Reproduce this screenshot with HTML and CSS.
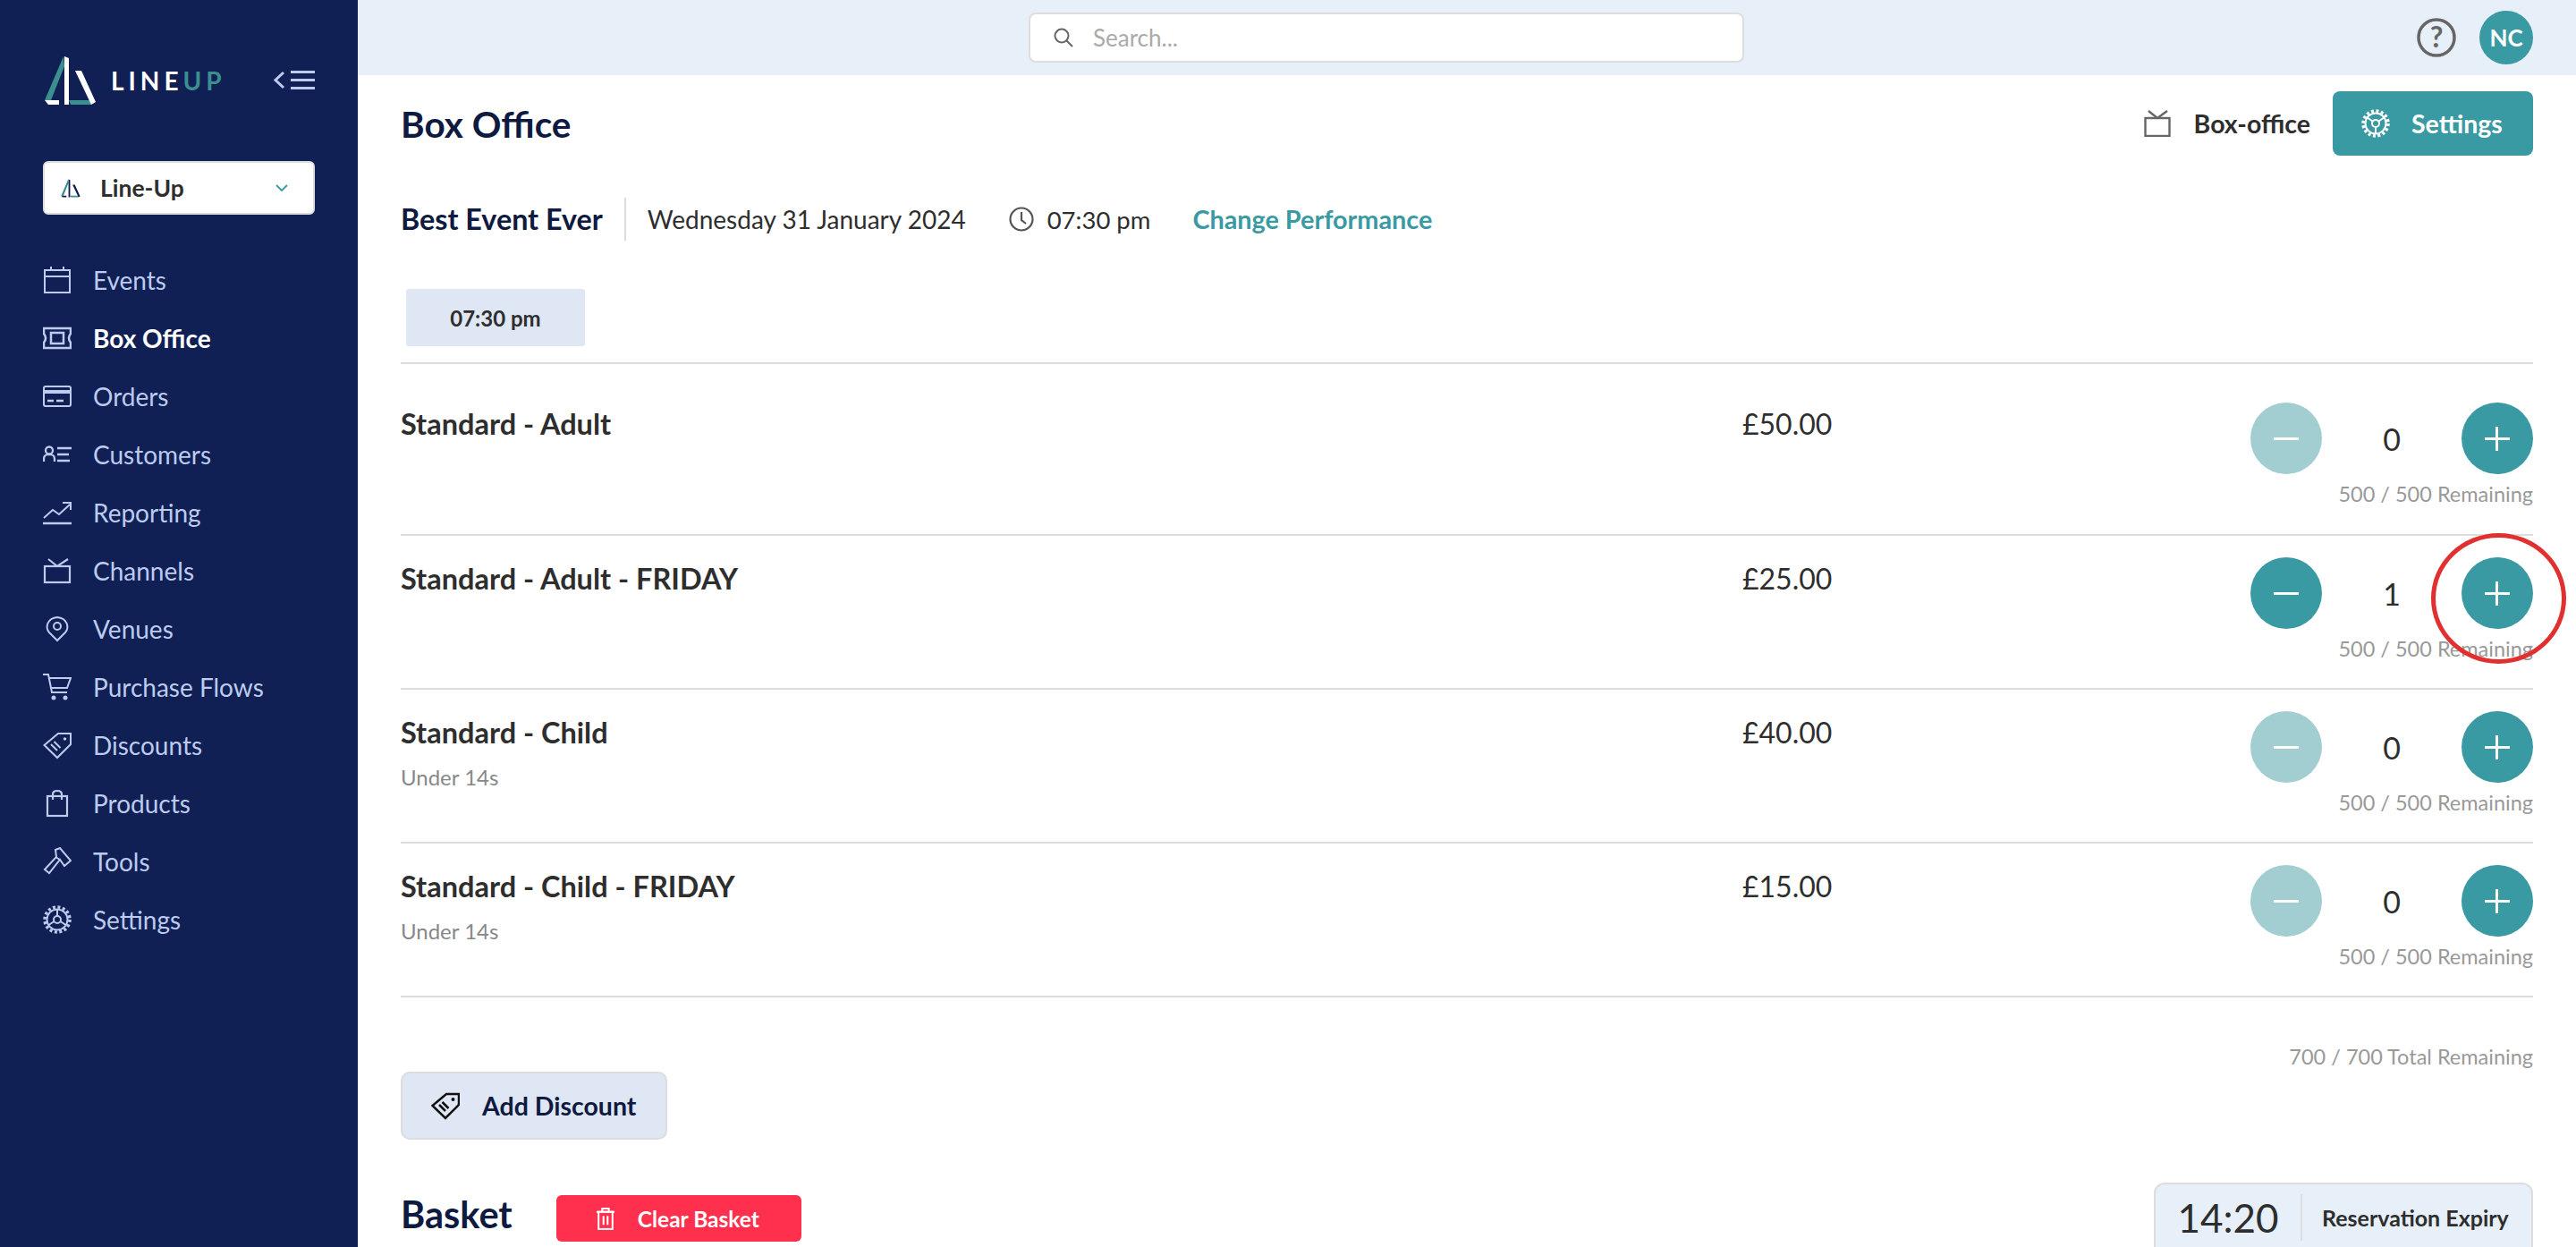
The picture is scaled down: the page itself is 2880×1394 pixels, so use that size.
FILE: index.html
```html
<!DOCTYPE html>
<html lang="en">
<head>
  <meta charset="UTF-8" />
  <title>Box Office</title>
  <link rel="stylesheet" href="styles.css">
</head>
<body>
  <div class="app">
    <aside class="sidebar">
      <div class="brand">
        <svg class="brand-mark" viewBox="0 0 59 56">
          <polygon class="teal" points="22,1 23,12 8,50 1,50" />
          <polygon class="white" points="23,1 28,3 28,55 23,55" />
          <polygon class="white" points="1,50 17,50 17,55 5,55" />
          <polygon class="teal" points="28,50 52,50 53,55 30,55" />
          <polygon class="white" points="35,17 42,17 58,52 53,55" />
        </svg>
        <span class="brand-name">LINE<span class="brand-up">UP</span></span>
        <svg class="collapse" viewBox="0 0 46 22" fill="none" stroke="currentColor">
          <path d="M11 2 L2 10.500 L11 19" stroke-width="3" />
          <path d="M19 1.500 H46 M19 10.500 H46 M19 19.500 H46" stroke-width="3" />
        </svg>
      </div>

      <div class="org-select">
        <svg class="org-mark" viewBox="0 0 59 56">
          <polygon class="teal" points="22,1 23,12 8,50 1,50" />
          <polygon class="navy" points="23,1 28,3 28,55 23,55" />
          <polygon class="navy" points="1,50 17,50 17,55 5,55" />
          <polygon class="teal" points="28,50 52,50 53,55 30,55" />
          <polygon class="navy" points="35,17 42,17 58,52 53,55" />
        </svg>
        <span class="org-name">Line-Up</span>
        <svg class="org-chevron" viewBox="0 0 14 9" fill="none" stroke="currentColor" stroke-width="1.800"><path d="M1 1 L7 7 L13 1" /></svg>
      </div>

      <nav class="nav">
        <a class="nav-item">
          <svg class="nav-icon" viewBox="0 0 32 32" fill="none" stroke="currentColor" stroke-width="2"><rect x="2" y="5" width="28" height="25" /><path d="M2 12 H30 M9 1 V5 M23 1 V5" /></svg>
          Events
        </a>
        <a class="nav-item active">
          <svg class="nav-icon" viewBox="0 0 32 32" fill="none" stroke="currentColor" stroke-width="2.500"><path d="M1 5 H31 V11 Q27 16 31 21 V27 H1 V21 Q5 16 1 11 Z" /><rect x="9" y="10" width="14" height="12" /></svg>
          Box Office
        </a>
        <a class="nav-item">
          <svg class="nav-icon" viewBox="0 0 32 32" fill="none" stroke="currentColor" stroke-width="2"><rect x="1" y="5" width="30" height="22" rx="2" /><path d="M1 11 H31" stroke-width="4" /><path d="M5 21 H12 M15 21 H23" stroke-width="2.500" /></svg>
          Orders
        </a>
        <a class="nav-item">
          <svg class="nav-icon" viewBox="0 0 32 32" fill="none" stroke="currentColor" stroke-width="2.300"><circle cx="7" cy="11.500" r="4" /><path d="M1 24 V21 Q1 17 5 16 H9 Q13 17 13 21 V24" /><path d="M16 9 H32 M16 16 H29 M16 23 H30" /></svg>
          Customers
        </a>
        <a class="nav-item">
          <svg class="nav-icon" viewBox="0 0 32 32" fill="none" stroke="currentColor" stroke-width="2"><path d="M1 22 L11 13 L18 18 L30 7" /><path d="M22 5 H31 V13" /><path d="M0 28 H32" stroke-width="2.500" /></svg>
          Reporting
        </a>
        <a class="nav-item">
          <svg class="nav-icon" viewBox="0 0 32 32" fill="none" stroke="currentColor" stroke-width="2.200"><rect x="2" y="11" width="28" height="18" /><path d="M6 3 L16 11 L28 3" /></svg>
          Channels
        </a>
        <a class="nav-item">
          <svg class="nav-icon" viewBox="0 0 32 32" fill="none" stroke="currentColor" stroke-width="2"><path d="M16 29 L7 20 C2 14 5 4 16 3 C27 4 30 14 25 20 Z" /><circle cx="16" cy="13" r="4" /></svg>
          Venues
        </a>
        <a class="nav-item">
          <svg class="nav-icon" viewBox="0 0 32 32" fill="none" stroke="currentColor" stroke-width="2"><path d="M0 2 H6 L10 22 H27" /><path d="M7 6 H31 L27 17 H9" /><circle cx="12" cy="28" r="1.500" fill="currentColor" /><circle cx="25" cy="28" r="1.500" fill="currentColor" /></svg>
          Purchase Flows
        </a>
        <a class="nav-item">
          <svg class="nav-icon" viewBox="0 0 32 32" fill="none" stroke="currentColor" stroke-width="2"><path d="M1.500 16 L17 3 H31 V15 L16 30 Z" /><circle cx="24.500" cy="9" r="1.800" fill="currentColor" stroke="none" /><path d="M9 15 L16 22 M12.500 12 L19.500 19" /></svg>
          Discounts
        </a>
        <a class="nav-item">
          <svg class="nav-icon" viewBox="0 0 32 32" fill="none" stroke="currentColor" stroke-width="2.200"><rect x="5" y="8" width="22" height="22" /><path d="M11 12 V6 Q11 2 16 2 Q21 2 21 6 V12" /></svg>
          Products
        </a>
        <a class="nav-item">
          <svg class="nav-icon" viewBox="0 0 32 32" fill="none" stroke="currentColor" stroke-width="2"><path d="M14 3 L19 1 L31 15 L24 21 L19 14 L7 29 L2 25 L15 11 Z" /><path d="M14 11 L19 14" /></svg>
          Tools
        </a>
        <a class="nav-item">
          <svg class="nav-icon" viewBox="0 0 32 32" fill="none" stroke="currentColor"><circle cx="16" cy="16" r="14" stroke-width="3.500" stroke-dasharray="3 2.500" /><circle cx="16" cy="16" r="11.500" stroke-width="2" /><circle cx="16" cy="16" r="4" stroke-width="2" /><path d="M16 5 V12 M6.500 22 L12.500 18 M25.500 22 L19.500 18" stroke-width="2" /></svg>
          Settings
        </a>
      </nav>
    </aside>

    <div class="main">
      <header class="topbar">
        <div class="search">
          <svg class="search-icon" viewBox="0 0 24 24" fill="none" stroke="currentColor" stroke-width="2"><circle cx="10" cy="10" r="7.500" /><path d="M15.500 15.500 L22 22" /></svg>
          <span>Search...</span>
        </div>
        <div class="top-actions">
          <svg class="help" viewBox="0 0 44 44"><circle cx="22" cy="22" r="20" fill="none" stroke="#666" stroke-width="3.500" /><text x="22" y="33" text-anchor="middle" class="help-mark">?</text></svg>
          <div class="avatar">NC</div>
        </div>
      </header>

      <div class="content">
        <div class="page-head">
          <h1>Box Office</h1>
          <div class="page-tools">
            <svg class="tv-icon" viewBox="0 0 30 30" fill="none" stroke="#666" stroke-width="2.400"><rect x="1.500" y="9" width="27" height="20" /><path d="M5 1 L15 9 L26 1" /></svg>
            <span class="channel-name">Box-office</span>
            <button class="btn-settings">
              <svg class="btn-gear" viewBox="0 0 32 32" fill="none" stroke="currentColor"><circle cx="16" cy="16" r="14" stroke-width="3.500" stroke-dasharray="3 2.500" /><circle cx="16" cy="16" r="11.500" stroke-width="2" /><circle cx="16" cy="16" r="4" stroke-width="2" /><path d="M16 20 V28 M12.500 13.500 L6 9 M19.500 13.500 L26 9" stroke-width="2" /></svg>
              Settings
            </button>
          </div>
        </div>

        <div class="event-line">
          <strong class="event-name">Best Event Ever</strong>
          <span class="event-date">Wednesday 31 January 2024</span>
          <svg class="clock" viewBox="0 0 28 28" fill="none" stroke="#555" stroke-width="2.200"><circle cx="14" cy="14" r="12.500" /><path d="M14 6 V15 L19 19" /></svg>
          <span class="event-time">07:30 pm</span>
          <a class="change-link">Change Performance</a>
        </div>

        <div class="slot">07:30 pm</div>

        <div class="tickets">
          <div class="ticket first">
            <div class="ticket-info"><div class="ticket-name">Standard - Adult</div></div>
            <div class="ticket-price">£50.00</div>
            <div class="ticket-qty">
              <div class="stepper">
                <button class="round off"><span class="minus"></span></button>
                <span class="count">0</span>
                <button class="round"><span class="plus"></span></button>
              </div>
              <div class="remaining">500 / 500 Remaining</div>
            </div>
          </div>
          <div class="ticket">
            <div class="ticket-info"><div class="ticket-name">Standard - Adult - FRIDAY</div></div>
            <div class="ticket-price">£25.00</div>
            <div class="ticket-qty">
              <div class="stepper">
                <button class="round"><span class="minus"></span></button>
                <span class="count">1</span>
                <button class="round circled"><span class="plus"></span></button>
              </div>
              <div class="remaining">500 / 500 Remaining</div>
            </div>
          </div>
          <div class="ticket">
            <div class="ticket-info">
              <div class="ticket-name">Standard - Child</div>
              <div class="ticket-note">Under 14s</div>
            </div>
            <div class="ticket-price">£40.00</div>
            <div class="ticket-qty">
              <div class="stepper">
                <button class="round off"><span class="minus"></span></button>
                <span class="count">0</span>
                <button class="round"><span class="plus"></span></button>
              </div>
              <div class="remaining">500 / 500 Remaining</div>
            </div>
          </div>
          <div class="ticket">
            <div class="ticket-info">
              <div class="ticket-name">Standard - Child - FRIDAY</div>
              <div class="ticket-note">Under 14s</div>
            </div>
            <div class="ticket-price">£15.00</div>
            <div class="ticket-qty">
              <div class="stepper">
                <button class="round off"><span class="minus"></span></button>
                <span class="count">0</span>
                <button class="round"><span class="plus"></span></button>
              </div>
              <div class="remaining">500 / 500 Remaining</div>
            </div>
          </div>
        </div>

        <div class="total-remaining">700 / 700 Total Remaining</div>

        <button class="btn-discount">
          <svg class="discount-icon" viewBox="0 0 32 32" fill="none" stroke="#111" stroke-width="2.500"><path d="M1.500 16 L17 3 H31 V15 L16 30 Z" /><circle cx="24.500" cy="9" r="2" fill="#111" stroke="none" /><path d="M9 15 L16 22 M12.500 12 L19.500 19" /></svg>
          Add Discount
        </button>

        <div class="basket-head">
          <h2>Basket</h2>
          <button class="btn-clear">
            <svg class="trash" viewBox="0 0 24 28" fill="none" stroke="currentColor" stroke-width="2.200"><path d="M1 6 H23 M8 6 V2 H16 V6" /><rect x="3.500" y="6" width="17" height="21" /><path d="M9.500 11 V22 M14.500 11 V22" /></svg>
            Clear Basket
          </button>
          <div class="expiry">
            <span class="expiry-time">14:20</span>
            <span class="expiry-label">Reservation Expiry</span>
          </div>
        </div>
      </div>
    </div>
  </div>
</body>
</html>
```

FILE: styles.css
```css
* {
  margin: 0;
  padding: 0;
  box-sizing: border-box;
  font-family: 'Lato', sans-serif;
}

html, body {
  height: 100%;
  overflow: hidden;
  background: #fff;
}

.app {
  display: flex;
  height: 100vh;
}

/* sidebar */
.sidebar {
  flex: 0 0 400px;
  background: #102054;
  color: #bccbee;
  padding: 62px 48px 0;
}

.brand {
  display: flex;
  align-items: center;
  height: 56px;
}

.brand-mark {
  width: 59px;
  height: 56px;
  margin-left: 1px;
}

.teal { fill: #3c8f8f; }
.white { fill: #fff; }
.navy { fill: #102054; }

.brand-name {
  margin-left: 16px;
  font-size: 28px;
  font-weight: 700;
  letter-spacing: 5px;
  color: #fff;
}

.brand-up { color: #3c8f8f; }

.collapse {
  width: 46px;
  height: 22px;
  margin-left: auto;
  color: #bccbee;
}

.org-select {
  display: flex;
  align-items: center;
  height: 60px;
  margin-top: 62px;
  padding: 0 28px 0 18px;
  background: #fff;
  border: 2px solid #ddd;
  border-radius: 6px;
}

.org-mark {
  width: 22px;
  height: 21px;
}

.org-name {
  margin-left: 22px;
  font-size: 26.500px;
  font-weight: 700;
  color: #2e2e2e;
}

.org-chevron {
  width: 14px;
  height: 9px;
  margin-left: auto;
  color: #3a9aa3;
}

.nav {
  margin-top: 40px;
}

.nav-item {
  display: flex;
  align-items: center;
  gap: 24px;
  height: 65px;
  font-size: 28px;
}

.nav-item.active {
  color: #fff;
  font-weight: 700;
}

.nav-icon {
  flex: 0 0 32px;
  width: 32px;
  height: 32px;
  color: #bccbee;
}

/* top bar */
.main {
  flex: 1;
  min-width: 0;
  display: flex;
  flex-direction: column;
}

.topbar {
  flex: 0 0 84px;
  display: flex;
  align-items: center;
  justify-content: space-between;
  padding: 0 48px 0 750px;
  background: #e7eff9;
}

.search {
  display: flex;
  align-items: center;
  gap: 21px;
  width: 800px;
  height: 56px;
  padding-left: 25px;
  background: #fff;
  border: 2px solid #ddd;
  border-radius: 8px;
  font-size: 26px;
  color: #aaa;
}

.search-icon {
  width: 24px;
  height: 24px;
  color: #666;
}

.top-actions {
  display: flex;
  align-items: center;
  gap: 26px;
}

.help {
  width: 44px;
  height: 44px;
}

.help-mark {
  font-family: 'Lato', sans-serif;
  font-size: 32px;
  font-weight: 700;
  fill: #666;
}

.avatar {
  display: flex;
  align-items: center;
  justify-content: center;
  width: 60px;
  height: 60px;
  border-radius: 50%;
  background: #3a9aa3;
  color: #fff;
  font-size: 26px;
  font-weight: 700;
}

/* content */
.content {
  flex: 1;
  padding: 0 48px;
}

.page-head {
  display: flex;
  align-items: center;
  justify-content: space-between;
  height: 72px;
  margin-top: 18px;
}

h1 {
  font-size: 40.500px;
  font-weight: 700;
  color: #0e1a40;
}

.page-tools {
  display: flex;
  align-items: center;
}

.tv-icon {
  width: 30px;
  height: 30px;
}

.channel-name {
  margin-left: 26px;
  margin-right: 25px;
  font-size: 28.500px;
  font-weight: 700;
  color: #2e2e2e;
}

.btn-settings {
  display: flex;
  align-items: center;
  gap: 24px;
  width: 224px;
  height: 72px;
  padding-left: 32px;
  border: none;
  border-radius: 8px;
  background: #3a9aa3;
  color: #fff;
  font-size: 28.500px;
  font-weight: 700;
}

.btn-gear {
  width: 32px;
  height: 32px;
}

.event-line {
  display: flex;
  align-items: center;
  height: 48px;
  margin-top: 47px;
}

.event-name {
  padding-right: 24px;
  border-right: 2px solid #ddd;
  height: 48px;
  line-height: 48px;
  font-size: 32.300px;
  color: #0e1a40;
}

.event-date {
  margin-left: 24px;
  font-size: 28px;
  color: #2e2e2e;
}

.clock {
  width: 28px;
  height: 28px;
  margin-left: 48px;
}

.event-time {
  margin-left: 15px;
  font-size: 27.500px;
  color: #2e2e2e;
}

.change-link {
  margin-left: 47px;
  font-size: 28.800px;
  font-weight: 700;
  color: #3a9aa3;
}

.slot {
  display: flex;
  align-items: center;
  justify-content: center;
  width: 200px;
  height: 64px;
  margin: 54px 0 18px 6px;
  background: #dfe6f4;
  border-radius: 3px;
  font-size: 24px;
  font-weight: 700;
  color: #2e2e2e;
}

/* ticket rows */
.tickets {
  border-top: 2px solid #ddd;
}

.ticket {
  display: flex;
  height: 172px;
  padding-top: 24px;
  border-bottom: 2px solid #ddd;
}

.ticket.first {
  height: 192px;
  padding-top: 43px;
}

.ticket-info {
  flex: 0 0 1500px;
  padding-top: 6px;
}

.ticket-name {
  font-size: 32.500px;
  font-weight: 700;
  line-height: 36px;
  color: #2e2e2e;
}

.ticket-note {
  margin-top: 17px;
  font-size: 24px;
  color: #888;
}

.ticket-price {
  padding-top: 6px;
  font-size: 32px;
  line-height: 36px;
  color: #2e2e2e;
}

.ticket-qty {
  margin-left: auto;
  display: flex;
  flex-direction: column;
  align-items: flex-end;
}

.stepper {
  display: flex;
  align-items: center;
}

.round {
  position: relative;
  display: flex;
  align-items: center;
  justify-content: center;
  width: 80px;
  height: 80px;
  border: none;
  border-radius: 50%;
  background: #3a9aa3;
}

.round.off {
  background: #a2ced2;
}

.minus,
.plus {
  position: relative;
  display: block;
  width: 28px;
  height: 3px;
  background: #fff;
}

.plus::after {
  content: "";
  position: absolute;
  left: 12px;
  top: -12px;
  width: 3px;
  height: 27px;
  background: #fff;
}

.round.circled::after {
  content: "";
  position: absolute;
  left: -34px;
  top: -27px;
  width: 141px;
  height: 136px;
  border: 5px solid #e03030;
  border-radius: 50%;
}

.count {
  width: 156px;
  text-align: center;
  font-size: 34px;
  color: #2e2e2e;
}

.remaining {
  margin-top: 8px;
  font-size: 23.500px;
  color: #999;
}

.total-remaining {
  margin-top: 52px;
  text-align: right;
  font-size: 23.500px;
  color: #999;
}

.btn-discount {
  display: flex;
  align-items: center;
  gap: 25px;
  width: 298px;
  height: 76px;
  margin-top: 3px;
  padding-left: 32px;
  background: #dfe6f4;
  border: 2px solid #ddd;
  border-radius: 10px;
  font-size: 28.500px;
  font-weight: 700;
  color: #0e1a40;
}

.discount-icon {
  width: 32px;
  height: 32px;
}

.basket-head {
  display: flex;
  align-items: flex-start;
  margin-top: 48px;
}

h2 {
  margin-top: 10px;
  font-size: 41.500px;
  font-weight: 700;
  color: #0e1a40;
}

.btn-clear {
  display: flex;
  align-items: center;
  gap: 25px;
  width: 274px;
  height: 52px;
  margin-left: 49px;
  margin-top: 14px;
  padding-left: 44px;
  border: none;
  border-radius: 6px;
  background: #ff2f4e;
  color: #fff;
  font-size: 24.500px;
  font-weight: 700;
}

.trash {
  width: 22px;
  height: 26px;
}

.expiry {
  display: flex;
  align-items: center;
  width: 424px;
  height: 90px;
  margin-left: auto;
  background: #e7eff9;
  border: 2px solid #ddd;
  border-radius: 12px;
  padding: 12px 0 24px;
}

.expiry-time {
  width: 164px;
  height: 52px;
  line-height: 52px;
  text-align: center;
  border-right: 2px solid #ddd;
  font-size: 44px;
  font-weight: 400;
  color: #2e2e2e;
}

.expiry-label {
  margin-left: 22px;
  font-size: 25px;
  font-weight: 700;
  color: #2e2e2e;
}
```
